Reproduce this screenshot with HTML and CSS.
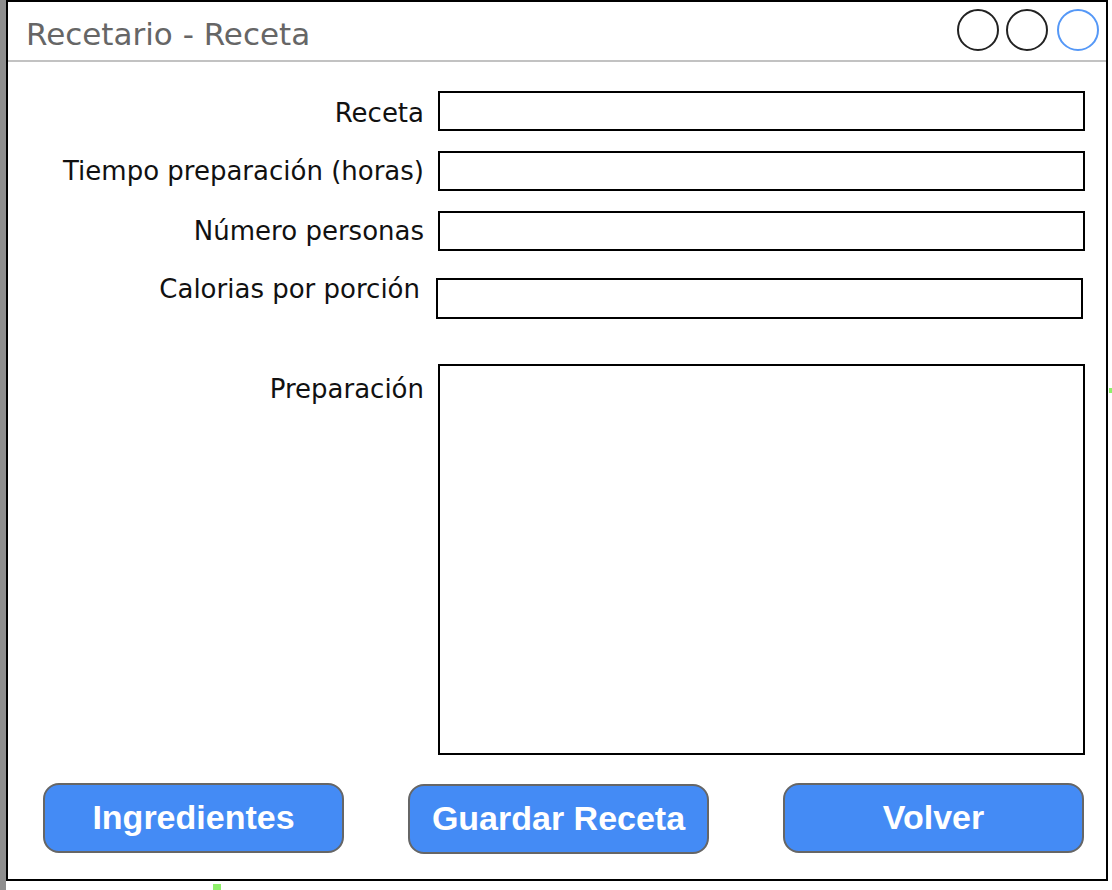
FILE: index.html
```html
<!DOCTYPE HTML>
<html>
<head>
<meta charset="utf-8">
<title>Recetario - Receta</title>
<link rel="stylesheet" href="styles.css">
</head>
<body>
<div class="page">
  <div class="edge"></div>
  <div class="window">
    <!--title bar-->
    <div class="titlebar">
      <span class="title">Recetario - Receta</span>
      <span class="controls">
        <span class="dot"></span>
        <span class="dot"></span>
        <span class="dot dot-blue"></span>
      </span>
    </div>

    <!--form fields-->
    <div class="form">
      <div class="row">
        <label class="lbl lbl-receta">Receta</label>
        <input class="field" type="text">
      </div>
      <div class="row">
        <label class="lbl">Tiempo preparación (horas)</label>
        <input class="field" type="text">
      </div>
      <div class="row">
        <label class="lbl">Número personas</label>
        <input class="field" type="text">
      </div>
      <div class="row row-cal">
        <label class="lbl">Calorias por porción</label>
        <input class="field" type="text">
      </div>
      <div class="row row-prep">
        <label class="lbl">Preparación</label>
        <textarea class="field area"></textarea>
      </div>
    </div>

    <!--buttons-->
    <div class="buttons">
      <button class="btn">Ingredientes</button>
      <button class="btn btn-mid">Guardar Receta</button>
      <button class="btn btn-last">Volver</button>
    </div>
  </div>
  <span class="speck speck-right"></span>
  <span class="speck speck-bottom"></span>
</div>
</body>
</html>
```

FILE: styles.css
```css
body
{
  margin: 0;
  background: #fff;
  font-family: "DejaVu Sans", sans-serif;
}
.page
{
  position: relative;
  display: flex;
  height: 890px;
}
.edge
{
  width: 6px;
  background: #8e8e8e;
}
.window
{
  box-sizing: border-box;
  width: 1102px;
  height: 881px;
  border: 2px solid #000;
  display: flex;
  flex-direction: column;
}

/* title bar */
.titlebar
{
  height: 58px;
  border-bottom: 2px solid #c2c2c2;
  display: flex;
  justify-content: space-between;
  padding: 0 7px 0 18px;
}
.title
{
  font-size: 31px;
  color: #666;
  padding-top: 14px;
}
.controls
{
  display: flex;
  gap: 7px;
  padding-top: 7px;
}
.dot
{
  box-sizing: border-box;
  width: 42px;
  height: 42px;
  border: 2px solid #222;
  border-radius: 50%;
}
.dot-blue
{
  border-color: #5598f7;
  margin-left: 2px;
}

/* form (row margins collapse, so the bigger one wins) */
.form
{
  padding: 29px 21px 0 0;
}
.row
{
  display: flex;
  align-items: center;
  gap: 12px;
  margin-bottom: 20px;
}
.lbl
{
  width: 416px;
  padding-right: 2px;
  text-align: right;
  font-size: 26px;
  color: #111;
}
.lbl-receta
{
  padding-top: 4px;
}
.field
{
  box-sizing: border-box;
  width: 647px;
  height: 40px;
  margin: 0;
  border: 2px solid #000;
  border-radius: 0;
  background: #fff;
  font-family: "DejaVu Sans", sans-serif;
}
.row-cal
{
  align-items: flex-start;
  margin-top: 27px;
  margin-left: -2px;
}
.row-cal .lbl
{
  padding-right: 4px;
  width: 414px;
  margin-top: -4px;
}
.row-cal .field
{
  height: 41px;
}
.row-prep
{
  align-items: flex-start;
  margin-top: 45px;
  margin-bottom: 0;
}
.row-prep .lbl
{
  padding-top: 10px;
}
.area
{
  height: 391px;
  resize: none;
}

/* buttons */
.buttons
{
  display: flex;
  padding: 0 22px 0 35px;
  margin-top: 28px;
}
.btn
{
  box-sizing: border-box;
  width: 301px;
  height: 70px;
  background: #448bf5;
  border: 2px solid #666;
  border-radius: 16px;
  color: #fff;
  font-family: "Liberation Sans", Arial, sans-serif;
  font-weight: bold;
  font-size: 34px;
  padding: 0 0 1px 0;
}
.btn-mid
{
  margin-left: 64px;
  margin-top: 1px;
}
.btn-last
{
  margin-left: auto;
}

/* stray marks from the mockup */
.speck
{
  position: absolute;
  background: #8ef06a;
}
.speck-right
{
  left: 1109px;
  top: 388px;
  width: 3px;
  height: 5px;
}
.speck-bottom
{
  left: 213px;
  top: 884px;
  width: 8px;
  height: 6px;
}
```
